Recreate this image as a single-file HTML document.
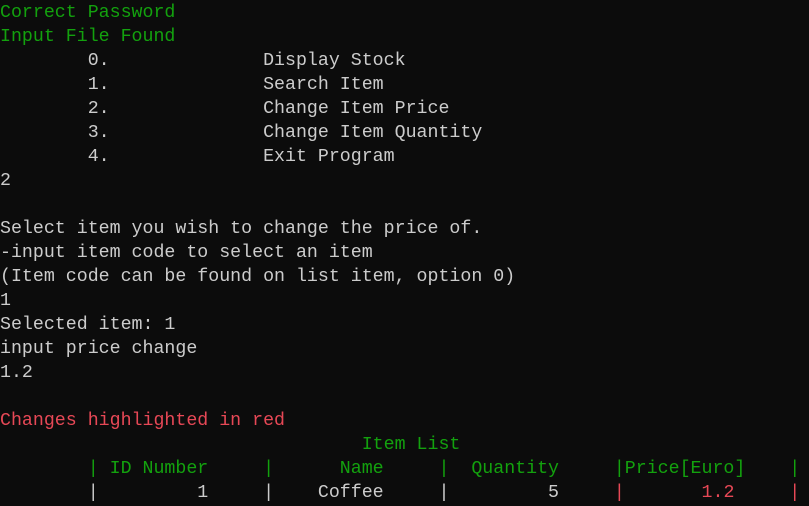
<!DOCTYPE html>
<html><head><meta charset="utf-8"><style>
html,body{margin:0;padding:0;background:#0c0c0c;width:809px;height:506px;overflow:hidden}
pre{margin:0;padding-top:1px;font-family:"Liberation Mono",monospace;font-size:18.27px;line-height:24px;color:#cccccc;white-space:pre}
.g{color:#13a10e}.r{color:#e74856}
</style></head><body><pre><span class="g">Correct Password
Input File Found</span>
        0.              Display Stock
        1.              Search Item
        2.              Change Item Price
        3.              Change Item Quantity
        4.              Exit Program
2

Select item you wish to change the price of.
-input item code to select an item
(Item code can be found on list item, option 0)
1
Selected item: 1
input price change
1.2

<span class="r">Changes highlighted in red</span>
<span class="g">                                 Item List</span>
<span class="g">        | ID Number     |      Name     |  Quantity     |Price[Euro]    |</span>
        |         1     |    Coffee     |         5     <span class="r">|       1.2     |</span></pre></body></html>
